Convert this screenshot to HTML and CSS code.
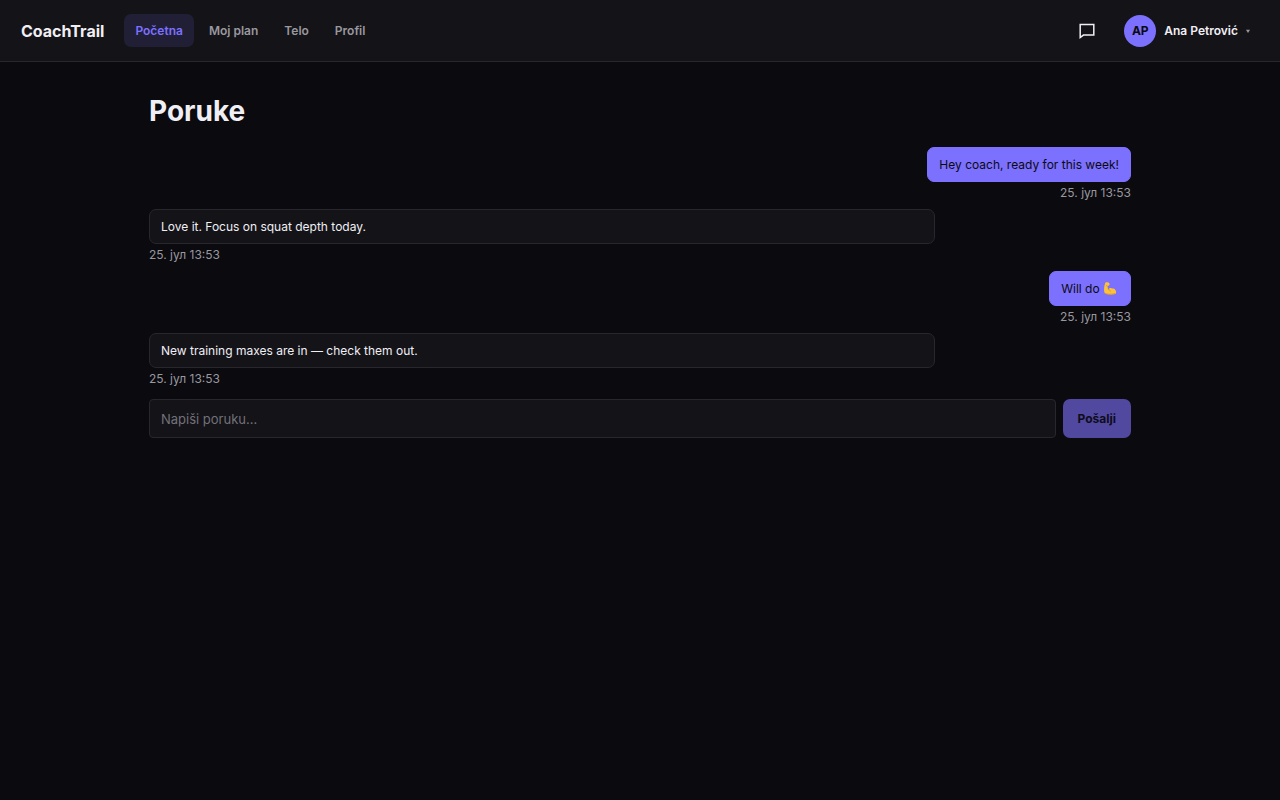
FILE: index.html
```html
<!DOCTYPE html>
<html lang="sr-Latn">
<head>
<meta charset="utf-8">
<meta name="viewport" content="width=device-width, initial-scale=1">
<title>CoachTrail</title>
<link rel="stylesheet" href="styles.css">
</head>
<body>
<header class="topbar">
  <a class="brand" href="#">CoachTrail</a>
  <nav class="nav">
    <a class="nav-link active" href="#" aria-current="page">Početna</a>
    <a class="nav-link" href="#">Moj plan</a>
    <a class="nav-link" href="#">Telo</a>
    <a class="nav-link" href="#">Profil</a>
  </nav>
  <div class="account">
    <a class="icon-link" href="#" aria-label="Poruke">
      <svg width="18" height="18" viewBox="0 0 18 18" fill="none" stroke="currentColor" stroke-width="1.5"><path d="M2.2 2.5h13.6v10.6H5.4L2.2 15.5z"/></svg>
    </a>
    <button class="profile" type="button">
      <span class="avatar">AP</span>
      <span>Ana Petrović</span>
      <svg class="caret" width="4" height="4" viewBox="0 0 4 4"><path d="M0 .8h4L2 4z" fill="currentColor"/></svg>
    </button>
  </div>
</header>
<main class="page">
  <h1 class="title">Poruke</h1>
  <div class="thread">
    <article class="message mine">
      <p class="bubble">Hey coach, ready for this week!</p>
      <time class="time">25. јул 13:53</time>
    </article>
    <article class="message">
      <p class="bubble">Love it. Focus on squat depth today.</p>
      <time class="time">25. јул 13:53</time>
    </article>
    <article class="message mine">
      <p class="bubble">Will do <svg class="emoji" width="16" height="13" viewBox="0 0 32 26" role="img" aria-label="💪"><path d="M5 1C8 0 12 1 13 3c1 3-1 5-4 5l1 7c2-3 6-4 9-2 5 0 8 4 7 10-5 3-15 3-22 0C1 18 2 8 5 1z" fill="#fdc23c"/><path d="M9 8 6 7m4 8c3 0 5 2 5 4M4 23c6 2 14 2 21 0" fill="none" stroke="#dc9128" stroke-width="1.6"/></svg></p>
      <time class="time">25. јул 13:53</time>
    </article>
    <article class="message">
      <p class="bubble">New training maxes are in — check them out.</p>
      <time class="time">25. јул 13:53</time>
    </article>
  </div>
  <form class="composer">
    <input class="field" type="text" placeholder="Napiši poruku…" aria-label="Napiši poruku">
    <button class="send" type="submit" disabled>Pošalji</button>
  </form>
</main>
</body>
</html>
```
FILE: styles.css
```css
* { box-sizing: border-box; }
body {
  margin: 0;
  background: #0b0a0f;
  color: #f0eff4;
  font: 12px/20px Inter, "Liberation Sans", sans-serif;
}
a { color: inherit; text-decoration: none; }
button, input { font: inherit; color: inherit; }
.topbar {
  display: flex;
  align-items: center;
  gap: 20px;
  padding: 14px 30px 14px 21px;
  background: #141318;
  border-bottom: 1px solid #28272d;
}
.brand { font-size: 16px; font-weight: 700; }
.nav { display: flex; gap: 4px; }
.nav-link {
  padding: 7px 11px 6px;
  border-radius: 7px;
  color: #99989f;
  font-weight: 600;
}
.nav-link.active { background: #211f35; color: #7c70ff; }
.account { display: flex; align-items: center; gap: 28px; margin-left: auto; }
.icon-link { display: flex; }
.profile {
  display: flex;
  align-items: center;
  gap: 8px;
  padding: 0;
  border: 0;
  background: none;
  font-weight: 600;
}
.avatar {
  width: 32px;
  border-radius: 50%;
  background: #7c70ff;
  color: #0b0a0f;
  line-height: 32px;
  text-align: center;
  font-weight: 700;
}
.caret { color: #99989f; }
.page { max-width: 1024px; margin: 0 auto; padding: 31px 21px; }
.title { margin: 0 0 18px; font-size: 28px; line-height: 36px; font-weight: 700; }
.thread { display: flex; flex-direction: column; gap: 5px; }
.message { width: 80%; }
.mine {
  display: flex;
  flex-direction: column;
  align-items: flex-end;
  align-self: flex-end;
}
.bubble {
  margin: 0;
  padding: 7px 11px 6px;
  border: 1px solid #28272d;
  border-radius: 7px;
  background: #141318;
}
.mine .bubble { background: #7c70ff; border-color: #7c70ff; color: #0b0a0f; }
.emoji { vertical-align: -2px; }
.time { display: block; color: #99989f; line-height: 22px; }
.composer { display: flex; gap: 7px; margin-top: 9px; }
.field {
  flex: 1;
  min-width: 0;
  height: 39px;
  padding: 0 11px;
  border: 1px solid #28272d;
  border-radius: 4px;
  background: #141318;
  font-size: 13px;
}
.field::placeholder { color: #727178; opacity: 1; }
.send {
  padding: 0 15px;
  border: 0;
  border-radius: 7px;
  background: #5148a0;
  color: #0e0c1a;
  font-weight: 700;
}
```
